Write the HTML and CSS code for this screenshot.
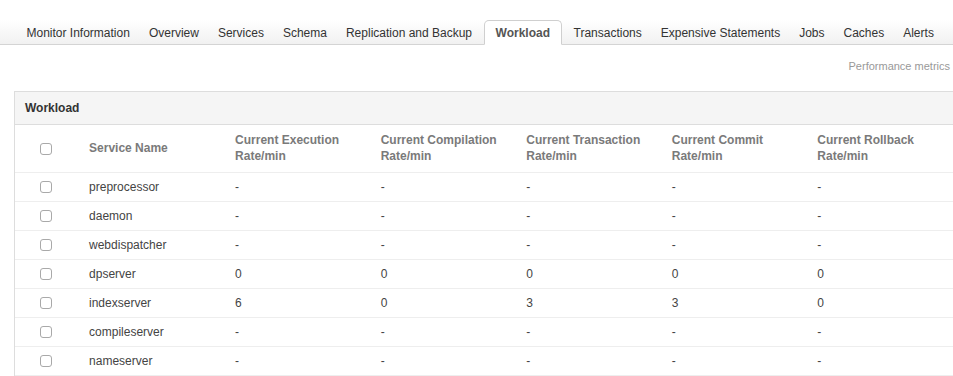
FILE: index.html
```html
<!DOCTYPE html>
<html lang="en">
<head>
<meta charset="UTF-8" />
<title>Workload</title>
<link rel="stylesheet" href="styles.css">
</head>
<body>
  <ul class="tabs">
    <li>Monitor Information</li>
    <li>Overview</li>
    <li>Services</li>
    <li>Schema</li>
    <li>Replication and Backup</li>
    <li class="active">Workload</li>
    <li>Transactions</li>
    <li>Expensive Statements</li>
    <li>Jobs</li>
    <li>Caches</li>
    <li>Alerts</li>
  </ul>

  <div class="meta">Performance metrics</div>

  <div class="panel">
    <div class="panel-heading">Workload</div>
    <table class="grid">
      <colgroup>
        <col class="c-check">
        <col class="c-name">
        <col class="c-num">
        <col class="c-num">
        <col class="c-num">
        <col class="c-num">
        <col class="c-num">
      </colgroup>
      <thead>
        <tr>
          <th class="check"><input type="checkbox"></th>
          <th>Service Name</th>
          <th>Current Execution<br>Rate/min</th>
          <th>Current Compilation<br>Rate/min</th>
          <th>Current Transaction<br>Rate/min</th>
          <th>Current Commit<br>Rate/min</th>
          <th>Current Rollback<br>Rate/min</th>
        </tr>
      </thead>
      <tbody>
        <tr>
          <td class="check"><input type="checkbox"></td>
          <td>preprocessor</td><td>-</td><td>-</td><td>-</td><td>-</td><td>-</td>
        </tr>
        <tr>
          <td class="check"><input type="checkbox"></td>
          <td>daemon</td><td>-</td><td>-</td><td>-</td><td>-</td><td>-</td>
        </tr>
        <tr>
          <td class="check"><input type="checkbox"></td>
          <td>webdispatcher</td><td>-</td><td>-</td><td>-</td><td>-</td><td>-</td>
        </tr>
        <tr>
          <td class="check"><input type="checkbox"></td>
          <td>dpserver</td><td>0</td><td>0</td><td>0</td><td>0</td><td>0</td>
        </tr>
        <tr>
          <td class="check"><input type="checkbox"></td>
          <td>indexserver</td><td>6</td><td>0</td><td>3</td><td>3</td><td>0</td>
        </tr>
        <tr>
          <td class="check"><input type="checkbox"></td>
          <td>compileserver</td><td>-</td><td>-</td><td>-</td><td>-</td><td>-</td>
        </tr>
        <tr>
          <td class="check"><input type="checkbox"></td>
          <td>nameserver</td><td>-</td><td>-</td><td>-</td><td>-</td><td>-</td>
        </tr>
      </tbody>
    </table>
  </div>
</body>
</html>
```

FILE: styles.css
```css
* {
  box-sizing: border-box;
}
body {
  margin: 0;
  font-family: "Liberation Sans", Arial, sans-serif;
  font-size: 12px;
  color: #333;
  background: #fff;
  overflow: hidden;
}

/* Tabs */
.tabs {
  display: flex;
  list-style: none;
  margin: 20px 0 0;
  padding: 0 0 0 17px;
  height: 25px;
  border-bottom: 1px solid #d4d4d4;
  background: linear-gradient(#fff, #f1f1f1);
}
.tabs li {
  padding: 2px 9.5px 0;
  line-height: 22px;
  white-space: nowrap;
  color: #333;
}
.tabs li.active {
  margin: 0 2px;
  padding: 1px 11px 0;
  background: #fff;
  border: 1px solid #cfcfcf;
  border-bottom-color: #fff;
  border-radius: 5px 5px 0 0;
  height: 25px;
  font-weight: bold;
  color: #555;
}

.meta {
  text-align: right;
  font-size: 11px;
  color: #999;
  padding: 15px 3px 0 0;
  height: 46px;
}

/* Panel */
.panel {
  margin-left: 14px;
  border: 1px solid #ddd;
  border-right: none;
  border-bottom: none;
}
.panel-heading {
  height: 33px;
  padding: 2px 0 0 10px;
  line-height: 29px;
  background: #f5f5f5;
  border-bottom: 1px solid #ddd;
  font-weight: bold;
  color: #333;
}

.grid {
  width: 100%;
  border-collapse: collapse;
  table-layout: fixed;
}
.c-check { width: 64px; }
.c-name { width: 146px; }
.c-num { width: 145.5px; }

.grid th,
.grid td {
  text-align: left;
  padding: 6px 10px;
  line-height: 16px;
  border-bottom: 1px solid #eee;
  white-space: nowrap;
  vertical-align: middle;
}
.grid th {
  padding-top: 7px;
  padding-bottom: 8px;
  font-weight: bold;
  color: #7a7a7a;
}
.grid td {
  color: #444;
}
.grid .check {
  padding: 0;
  text-align: center;
}

input[type="checkbox"] {
  appearance: none;
  -webkit-appearance: none;
  display: block;
  margin: 0 auto;
  width: 12px;
  height: 12px;
  border: 1px solid #a9a9a9;
  border-radius: 3px;
  background: #fff;
  position: relative;
  left: -1px;
}
```
